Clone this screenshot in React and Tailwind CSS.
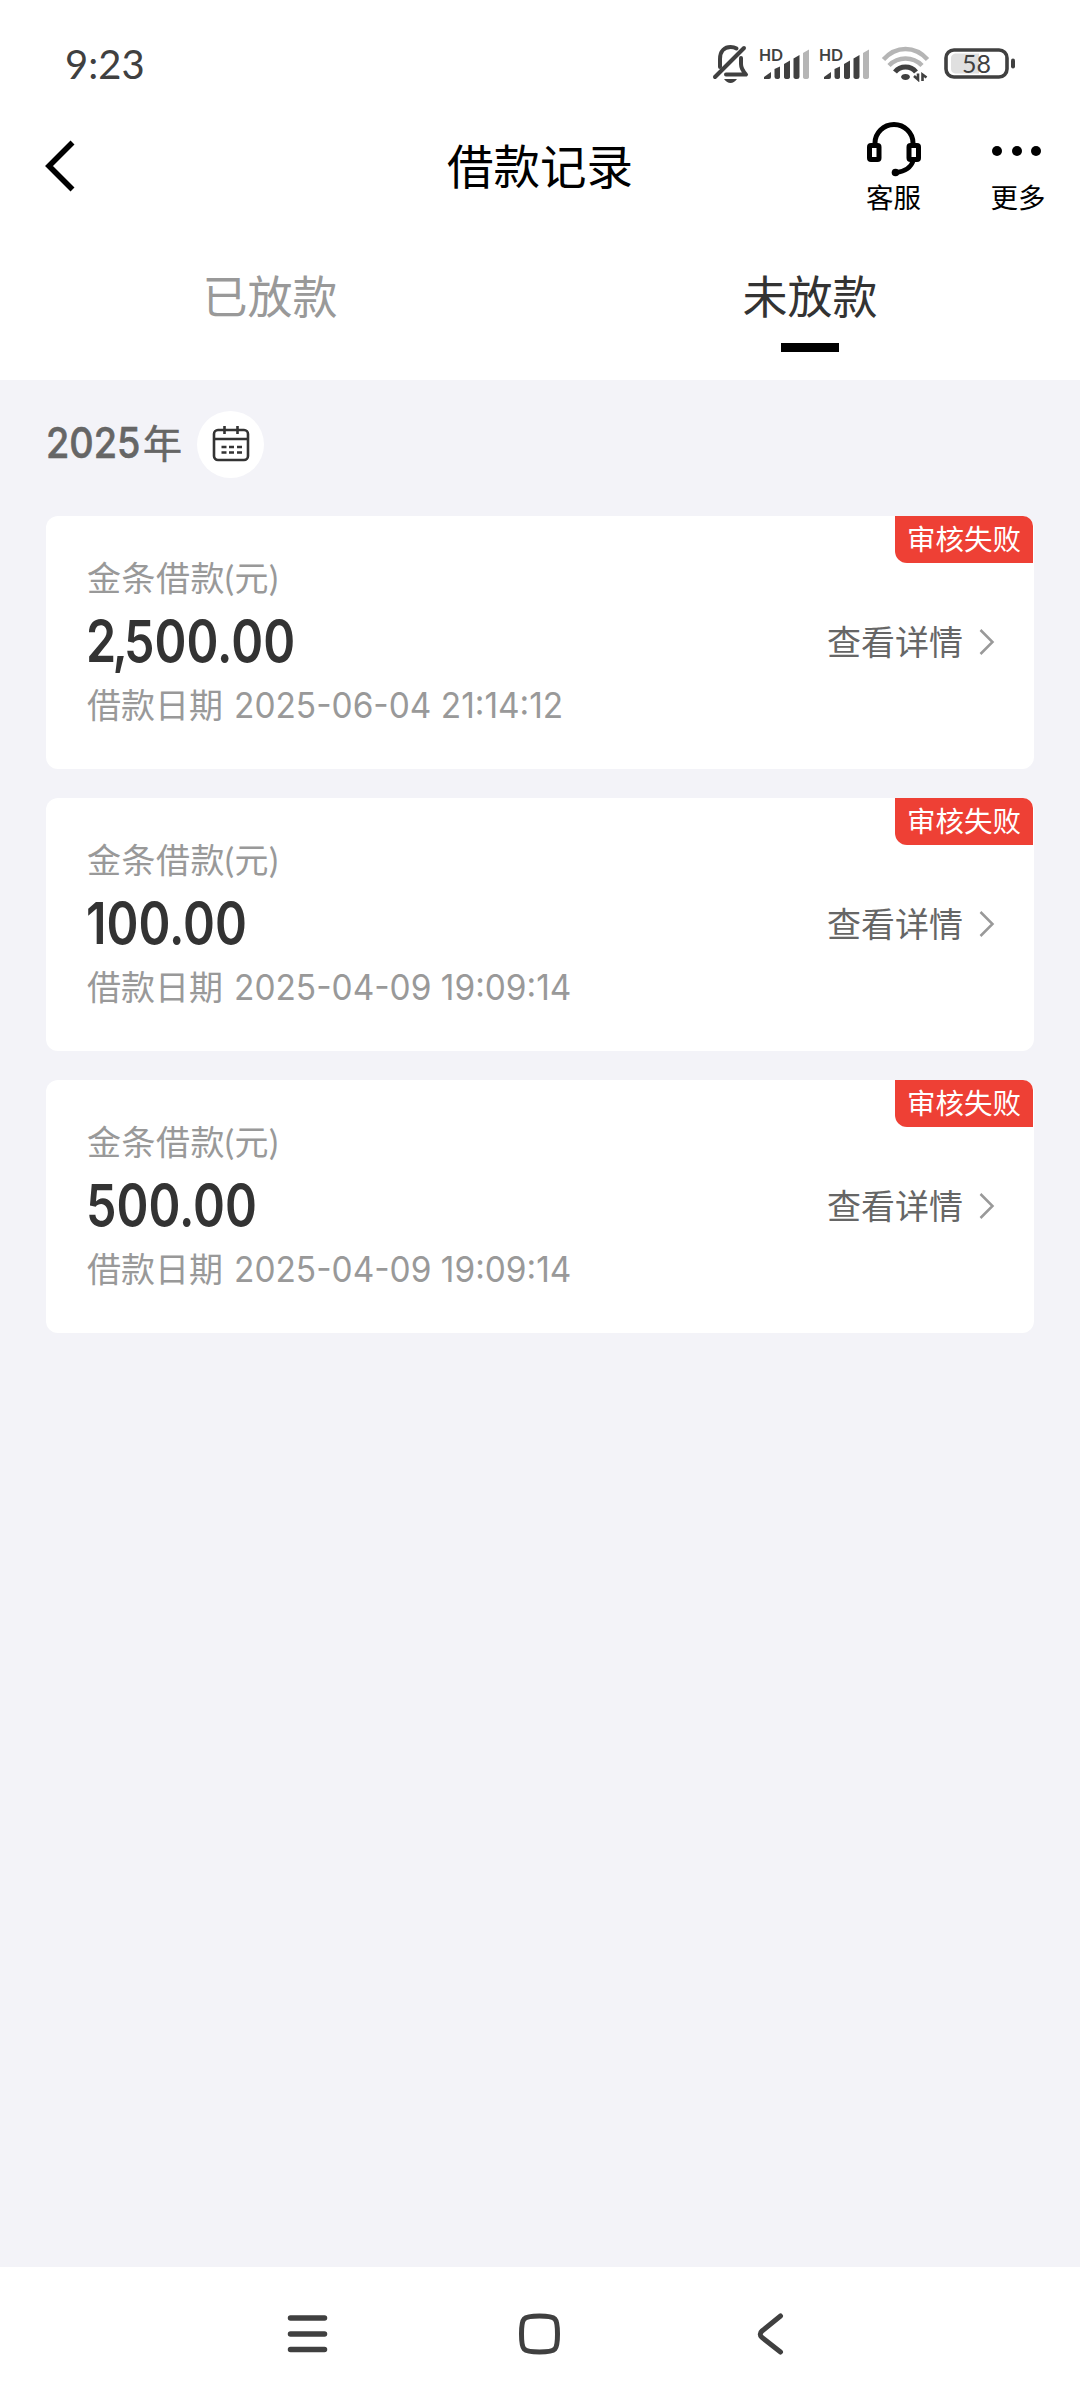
import React, { useState } from 'react';

const LOANS = [
  { id: 1, amount: '2,500.00', date: '2025-06-04', time: '21:14:12' },
  { id: 2, amount: '100.00', date: '2025-04-09', time: '19:09:14' },
  { id: 3, amount: '500.00', date: '2025-04-09', time: '19:09:14' },
];

const TABS = [
  { label: '已放款', val: 'PAID' },
  { label: '未放款', val: 'UNPAID' },
];

function Signal() {
  return (
    <svg className="overflow-visible" width="52" height="34" viewBox="0 0 52 34" fill="#404040">
      <text x="0" y="14.500" fontSize="17" fontWeight="700" fontFamily="Lato, sans-serif" textLength="24" lengthAdjust="spacingAndGlyphs">HD</text>
      <path d="M5 33V31L12 26V31Q12 33 10 33Z" />
      <path d="M15.500 23L21 20.500V31Q21 33 18 33Q15.500 33 15.500 31Z" />
      <path d="M25 18L31 14.500V31Q31 33 28 33Q25 33 25 31Z" />
      <path d="M34.500 12.500L40.500 9V31Q40.500 33 38 33Q34.500 33 34.500 31Z" />
      <path d="M44 7L50 3.500V31Q50 33 47 33Q44 33 44 31Z" fill="#b5b5b5" />
    </svg>
  );
}

function StatusBar() {
  return (
    <div className="flex h-[126px] items-start justify-between pl-[65px] pr-[63px]">
      <span className="mt-[38px] text-[40px] leading-[52px] text-[#404040]">9:23</span>
      <div className="mt-[44px] flex items-start">
        {/* Silencio */}
        <svg width="38" height="40" viewBox="0 0 38 40" fill="none" stroke="#404040" strokeWidth="4" strokeLinecap="round" strokeLinejoin="round">
          <path d="M3 33L32 4" />
          <path d="M8 23V15C8 6.500 13 3 18.500 3Q22 3 24.500 4.500" />
          <path d="M29 14V20Q29 25 34 30.500H14" />
          <path d="M12 35H25Q22 39 18.500 39Q15 39 12 35Z" fill="#404040" stroke="none" />
        </svg>
        <div className="ml-[9px] mt-[2px] flex gap-[8px]">
          <Signal />
          <Signal />
        </div>
        {/* Wifi */}
        <svg className="ml-[10px] mt-[2px]" width="50" height="36" viewBox="0 0 50 36" fill="none" strokeWidth="4.500">
          <path d="M2.500 13.500Q12 3 24.500 3T46.500 13.500" stroke="#b5b5b5" />
          <path d="M8 19.500Q15 12.500 24.500 12.500T41 19.500" stroke="#b5b5b5" />
          <path d="M14 26Q18 21 24.500 21T35 26" stroke="#404040" strokeWidth="5" />
          <path d="M20 31Q20.500 28 24.500 28T29 31Q28 34 24.500 34T20 31Z" fill="#404040" />
          <path d="M33 30L37 33.500V27.500M41.500 35V28.500L45.500 31.500" stroke="#404040" strokeWidth="2.600" />
        </svg>
        {/* Bateria */}
        <svg className="ml-[13px] mt-[3px]" width="73" height="34" viewBox="0 0 73 34">
          <rect x="2" y="3" width="61" height="27" rx="8" fill="#fff" stroke="#404040" strokeWidth="3.600" />
          <path d="M11 6.500H35V26.500H11Q7 25.500 7 22V11Q7 7.500 11 6.500Z" fill="#e0e0e0" />
          <rect x="67" y="11.500" width="4" height="10" rx="2" fill="#404040" />
          <text x="32.500" y="25.500" textAnchor="middle" fontSize="25" fontFamily="Lato, sans-serif" fill="#404040">58</text>
        </svg>
      </div>
    </div>
  );
}

function Header() {
  return (
    <div className="grid h-[110px] grid-cols-[1fr_auto_1fr]">
      <svg className="ml-[43px] mt-[12px]" width="34" height="56" viewBox="0 0 34 56" fill="none" stroke="#000" strokeWidth="5.600">
        <path d="M29.500 4.500L6 28L29.500 51.500" />
      </svg>
      <h1 className="mt-[10px] text-[46.500px] leading-[60px]">借款记录</h1>
      <div className="-mt-[4px] flex justify-end gap-[70px] pr-[35px] text-[27.500px] leading-[36px]">
        <div className="flex w-[55px] flex-col items-center whitespace-nowrap">
          <svg width="56" height="56" viewBox="0 0 56 56" fill="none" stroke="#000" strokeWidth="5">
            <path d="M9 23V21A19 18.500 0 0 1 47 21V23" />
            <rect x="3.500" y="23.500" width="9.500" height="14" rx="1.500" />
            <rect x="43" y="23.500" width="9.500" height="14" rx="1.500" />
            <path d="M47.500 38Q44 49 30 50.500" strokeWidth="4.500" />
            <circle cx="29.500" cy="50.500" r="3.800" fill="#000" stroke="none" />
          </svg>
          <span className="mt-[2px]">客服</span>
        </div>
        <div className="flex w-[54px] flex-col items-center whitespace-nowrap">
          <div className="flex h-[58px] items-center gap-[9.500px] pr-[3px]">
            <i className="size-[10px] rounded-full bg-black" />
            <i className="size-[10px] rounded-full bg-black" />
            <i className="size-[10px] rounded-full bg-black" />
          </div>
          <span>更多</span>
        </div>
      </div>
    </div>
  );
}

function Amount({ value }) {
  const [thousands, rest] = value.includes(',') ? value.split(',') : [null, value];

  return (
    <div className="mt-[5px] -ml-[1px] origin-left scale-x-[0.835] whitespace-nowrap font-[Inter] text-[58px] leading-[70px] font-semibold text-[#333]">
      {thousands && <>{thousands}<span className="-mx-[4.500px]">,</span></>}
      {rest}
    </div>
  );
}

function LoanCard({ loan }) {
  return (
    <div className="relative flex h-[253px] items-start justify-between rounded-[12px] bg-white pl-[41px] pr-[38px] pt-[39px]">
      <div className="text-[34px] text-[#999]">
        <div className="leading-[46px] tracking-[0.500px]">金条借款(元)</div>
        <Amount value={loan.amount} />
        <div className="mt-[6px] flex leading-[46px]">
          <span>借款日期</span>
          <span className="ml-[11px] origin-left scale-x-[0.955] whitespace-nowrap font-[Inter] text-[35px]">{loan.date} {loan.time}</span>
        </div>
      </div>
      <div className="mt-[63px] flex items-center text-[34px] leading-[48px] text-[#666]">
        <span>查看详情</span>
        <svg className="ml-[15px]" width="18" height="28" viewBox="0 0 18 28" fill="none" stroke="#999" strokeWidth="2.500">
          <path d="M2.500 2L14.500 14L2.500 26" />
        </svg>
      </div>
      <span className="absolute right-[1px] top-0 h-[47px] rounded-bl-[12px] rounded-tr-[10px] bg-[#ee4035] px-[12px] text-[28.500px] leading-[46px] text-white">审核失败</span>
    </div>
  );
}

export default function App() {
  const [activeTab, setActiveTab] = useState('UNPAID');

  return (
    <div className="flex h-[2400px] w-[1080px] flex-col bg-[#f3f3f8] font-[Lato,'Noto_Sans_CJK_SC',sans-serif] text-black">
      {/* Cabecera */}
      <div className="h-[380px] bg-white">
        <StatusBar />
        <Header />
        <div className="grid grid-cols-2">
          {TABS.map((tab) => (
            <button
              key={tab.val}
              onClick={() => setActiveTab(tab.val)}
              className={`flex flex-col items-center pt-[31px] text-[45px] leading-[60px] ${
                activeTab === tab.val ? 'text-[#333]' : 'text-[#999]'
              }`}
            >
              {tab.label}
              {activeTab === tab.val && <span className="mt-[16px] h-[9px] w-[58px] bg-black" />}
            </button>
          ))}
        </div>
      </div>

      {/* Lista */}
      <div className="flex-1 px-[46px] pt-[30px]">
        <div className="flex h-[68px] items-center">
          <div className="-mt-[3px] flex w-[136px] items-center whitespace-nowrap text-[39px] leading-[60px] text-[#666] [-webkit-text-stroke:0.6px_#666]">
            <span className="w-[97px]">
              <span className="inline-block origin-left scale-x-[0.880] font-[Inter] text-[43px] font-medium">2025</span>
            </span>
            <span>年</span>
          </div>
          <span className="ml-[15px] flex size-[67px] items-center justify-center rounded-full bg-white">
            <svg width="38" height="36" viewBox="0 0 38 36" fill="none" stroke="#333" strokeWidth="2.600">
              <rect x="2" y="4" width="34" height="30" rx="4" />
              <path d="M2 13H36M12.500 0V8M25.500 0V8" />
              <path d="M9.500 21H14.500M17 21H22M25 21H30M9.500 26.500H14.500M17 26.500H22M25 26.500H30" />
            </svg>
          </span>
        </div>
        <div className="mt-[38px] flex flex-col gap-[29px]">
          {LOANS.map((loan) => (
            <LoanCard key={loan.id} loan={loan} />
          ))}
        </div>
      </div>

      {/* Barra de navegación */}
      <div className="flex h-[133px] items-center bg-white pl-[286px]">
        <svg width="43" height="44" viewBox="0 0 43 44" stroke="#404040" strokeWidth="5.500" strokeLinecap="round">
          <path d="M4.500 6H38.500M4.500 22H38.500M4.500 37.500H38.500" />
        </svg>
        <svg className="ml-[189px]" width="43" height="44" viewBox="0 0 43 44" fill="none" stroke="#404040" strokeWidth="5">
          <path d="M3.500 22C3.500 6 4.500 4 21.500 4S39.500 6 39.500 22S38.500 40 21.500 40S3.500 38 3.500 22Z" />
        </svg>
        <svg className="ml-[195px]" width="28" height="44" viewBox="0 0 28 44" fill="none" stroke="#404040" strokeWidth="5" strokeLinecap="round">
          <path d="M24.500 4L6 19Q2.500 22 6 25.500L24.500 40" />
        </svg>
      </div>
    </div>
  );
}
